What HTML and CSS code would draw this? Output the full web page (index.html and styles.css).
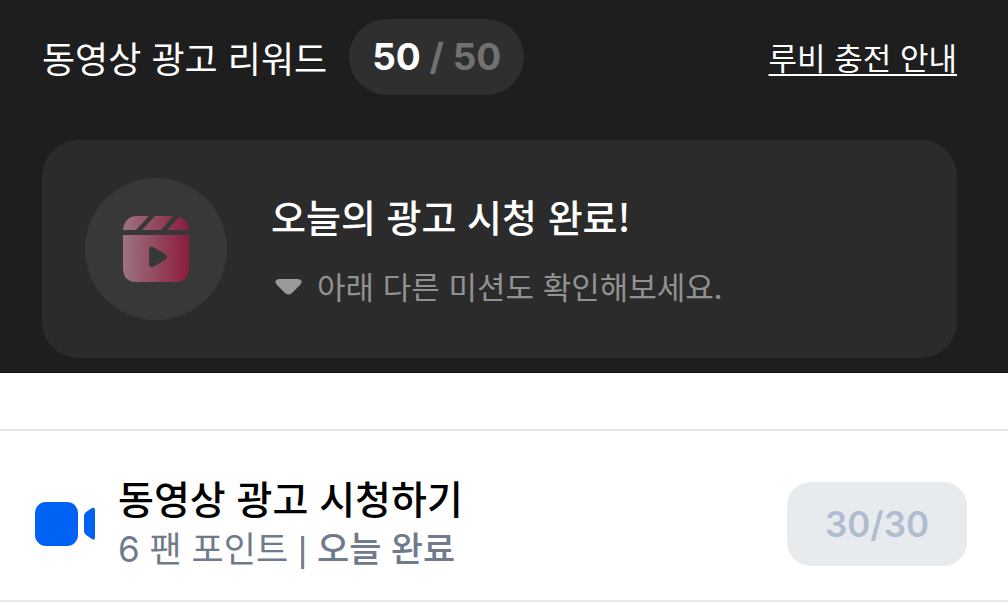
FILE: index.html
```html
<!DOCTYPE html>
<html lang="ko">
<head>
<meta charset="utf-8">
<meta name="viewport" content="width=device-width, initial-scale=1">
<title>동영상 광고 리워드</title>
<link rel="stylesheet" href="styles.css">
</head>
<body>
<section class="reward">
  <header class="reward-head">
    <h1 class="reward-title">동영상 광고 리워드</h1>
    <p class="counter">50 <span class="counter-total">/ 50</span></p>
    <a class="guide" href="#guide">루비 충전 안내</a>
  </header>
  <div class="card">
    <div class="card-icon">
      <svg width="66" height="66" viewBox="0 0 66 66" aria-hidden="true">
        <defs>
          <linearGradient id="ruby" gradientUnits="userSpaceOnUse" x1="0" y1="0" x2="66" y2="0">
            <stop offset="0" stop-color="#9b747f"/>
            <stop offset="1" stop-color="#8b1c3d"/>
          </linearGradient>
        </defs>
        <g fill="url(#ruby)">
          <path d="M0 14C1 5 6 0 14 0H26L13 14Z"/>
          <path d="M32 0H50L38 14H19Z"/>
          <path d="M56 1C62 3 65 7 66 14H44Z"/>
          <path fill-rule="evenodd" d="M0 19H66V52Q66 66 52 66H14Q0 66 0 52ZM26 34V48Q26 52 30 51L42 44Q46 41 42 38L30 31Q26 30 26 34Z"/>
        </g>
      </svg>
    </div>
    <div class="card-text">
      <h2 class="card-title">오늘의 광고 시청 완료!</h2>
      <p class="card-note">
        <svg width="27" height="17" viewBox="0 0 27 17" aria-hidden="true"><path fill="#999" d="M4 1H23Q29 2 25 7L17 15Q13.500 18 10 15L2 7Q-2 2 4 1Z"/></svg>
        아래 다른 미션도 확인해보세요.
      </p>
    </div>
  </div>
</section>
<ul class="missions">
  <li class="mission">
    <svg class="camera" width="60" height="44" viewBox="0 0 60 44" aria-hidden="true">
      <g fill="#0062f5"><rect width="43" height="44" rx="11"/><path d="M49 14Q49 12 51 10L57 6Q60 5 60 8V35Q60 39 57 37L51 33Q49 31 49 29Z"/></g>
    </svg>
    <div class="mission-text">
      <h2 class="mission-title">동영상 광고 시청하기</h2>
      <p class="mission-note">6 팬 포인트 <span class="divider">|</span> <strong class="done">오늘 완료</strong></p>
    </div>
    <button class="progress" type="button" disabled>30/30</button>
  </li>
</ul>
</body>
</html>
```
FILE: styles.css
```css
* {
  box-sizing: border-box;
}

body {
  margin: 0;
  background: #fff;
  color: #000;
  font-family: "Noto Sans CJK KR", sans-serif;
}

h1, h2, p, ul {
  margin: 0;
  padding: 0;
}

.reward {
  padding: 19px 51px 14px 42px;
  border-bottom: 1px solid #111;
  background: #1e1e1e;
  color: #fff;
}

.reward-head {
  display: flex;
  align-items: center;
  margin-bottom: 45px;
}

.reward-title {
  font-size: 36px;
  font-weight: 400;
  line-height: 48px;
}

.counter {
  margin-left: 22px;
  padding: 14px 23px;
  border-radius: 38px;
  background: #2f2f2f;
  font: 700 37px/48px Inter, sans-serif;
}

.counter-total {
  color: #717171;
}

.guide {
  margin-left: auto;
  color: #fff;
  font-size: 31px;
  line-height: 48px;
  text-underline-offset: 4px;
  text-decoration-thickness: 2px;
  text-decoration-skip-ink: none;
}

.card {
  display: flex;
  align-items: center;
  gap: 44px;
  padding: 38px 43px;
  border-radius: 36px;
  background: #2b2b2b;
}

.card-icon {
  display: grid;
  flex: none;
  place-items: center;
  width: 142px;
  height: 142px;
  border-radius: 50%;
  background: #383838;
}

.card-title {
  margin-bottom: 18px;
  font-size: 38px;
  font-weight: 500;
  line-height: 56px;
}

.card-note {
  display: flex;
  align-items: center;
  gap: 15px;
  padding-left: 4px;
  color: #919191;
  font-size: 31px;
  line-height: 48px;
}

.missions {
  margin-top: 56px;
  border-top: 2px solid #e7e7e7;
  list-style: none;
}

.mission {
  display: flex;
  align-items: center;
  padding: 42px 41px 26px 35px;
  border-bottom: 2px solid #e9e9e9;
}

.camera {
  flex: none;
  margin-right: 23px;
}

.mission-title {
  margin-bottom: 4px;
  font-size: 39px;
  font-weight: 500;
  line-height: 48px;
}

.mission-note {
  color: #6f7b8c;
  font-family: Inter, "Noto Sans CJK KR", sans-serif;
  font-size: 35px;
  line-height: 48px;
}

.divider {
  font-family: "Liberation Sans", sans-serif;
}

.done {
  font-weight: 500;
}

.progress {
  margin-left: auto;
  padding: 18px 38px;
  border: 0;
  border-radius: 24px;
  background: #e7ebee;
  color: #b0bdd0;
  font: 600 35px/48px Inter, sans-serif;
}
```
